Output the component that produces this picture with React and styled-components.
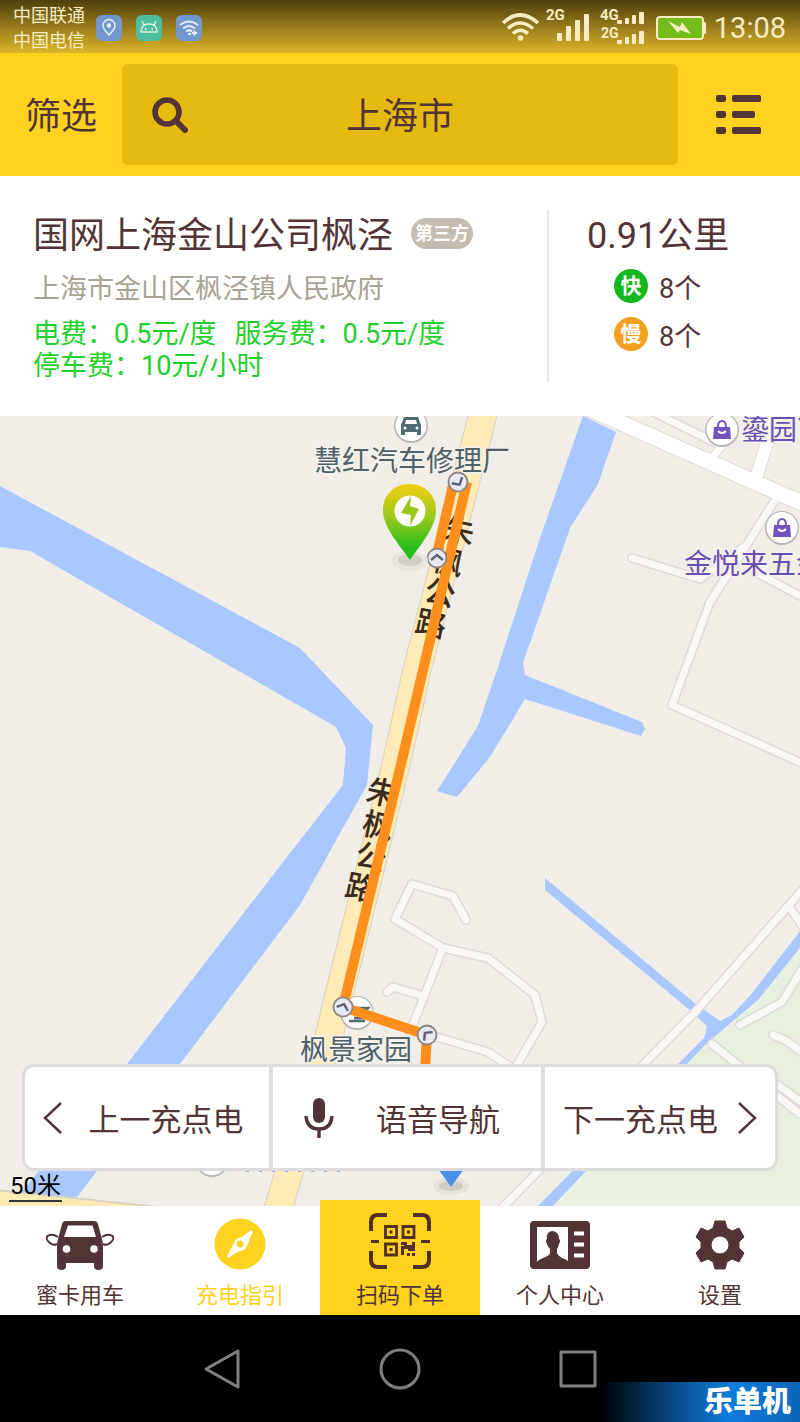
import React, { Component } from 'react'
import styled, { createGlobalStyle } from 'styled-components'

const GlobalStyle = createGlobalStyle`
* {
  box-sizing: border-box;
}
body {
  margin: 0;
  background: #000;
  color: #523436;
  font-family: Roboto, "Noto Sans CJK SC", sans-serif;
}
button, input {
  border: 0;
  margin: 0;
  padding: 0;
  background: none;
  color: inherit;
  font: inherit;
}
svg {
  display: block;
  flex: none;
}
`

const Page = styled.div`
  position: relative;
  display: flex;
  flex-direction: column;
  min-height: 100vh;
  overflow: hidden;
`

/* ---------- status bar ---------- */

const StatusBar = styled.div`
  display: flex;
  align-items: center;
  height: 53px;
  padding: 2px 14px 0 13px;
  background: linear-gradient(#4f3f0c, #967a1c 50%, #dcb52a);
  color: #f8ecc4;
`
const Carriers = styled.div`
  font-size: 18px;
  line-height: 25px;
  margin-right: 11px;
`
const AppIcons = styled.div`
  display: flex;
  gap: 14px;
`
const AppIcon = styled.svg`
  border-radius: 6px;
  background: ${props => props.$color};
`
const StatusRight = styled.div`
  display: flex;
  align-items: center;
  margin-left: auto;
`
const Clock = styled.time`
  margin-left: 8px;
  font-size: 29px;
  line-height: 50px;
`

/* ---------- header ---------- */

const Header = styled.header`
  display: grid;
  grid-template-columns: 122px 1fr 122px;
  align-items: center;
  padding: 11px 0;
  background: #ffd220;
`
const FilterButton = styled.button`
  padding-top: 4px;
  font-size: 36px;
  line-height: 54px;
`
const SearchBox = styled.label`
  display: grid;
  grid-template-columns: 66px 1fr 66px;
  align-items: center;
  height: 101px;
  border-radius: 6px;
  background: #e6b90e;

  svg {
    margin-left: 30px;
  }
`
const SearchInput = styled.input`
  width: 100%;
  height: 54px;
  padding-bottom: 3px;
  font-size: 36px;
  text-align: center;
  outline: none;
`
const MenuButton = styled.button`
  display: flex;
  justify-content: center;
`

/* ---------- station info ---------- */

const Info = styled.section`
  display: grid;
  grid-template-columns: 547fr 253fr;
  padding: 34px 0;
  background: #fff;
`
const InfoMain = styled.div`
  padding-left: 33px;
`
const TitleRow = styled.div`
  display: flex;
  align-items: center;
`
const Title = styled.h1`
  margin: 0;
  font-size: 36px;
  font-weight: 400;
  line-height: 52px;
`
const Badge = styled.span`
  margin: 0 0 6px 18px;
  padding: 0 4px;
  border-radius: 16px;
  background: #c4bcb1;
  color: #fff;
  font-size: 18px;
  font-weight: 700;
  line-height: 31px;
`
const Address = styled.p`
  margin: 8px 0 10px;
  color: #a9a396;
  font-size: 27px;
  line-height: 38px;
`
const Fees = styled.p`
  margin: 0;
  color: #1fcf2b;
  font-size: 27px;
  line-height: 32px;

  span {
    margin-right: 18px;
  }
`
const InfoSide = styled.div`
  padding-left: 38px;
  border-left: 2px solid #e9e9e9;
`
const Distance = styled.div`
  font-size: 36px;
  line-height: 52px;
`
const PileRow = styled.div`
  display: flex;
  align-items: center;
  gap: 11px;
  height: 48px;
  padding-left: 27px;
  font-size: 27px;
`
const PileType = styled.span`
  width: 34px;
  border-radius: 50%;
  background: ${props => props.$color};
  color: #fff;
  font-size: 21px;
  font-weight: 700;
  line-height: 34px;
  text-align: center;
`

/* ---------- map ---------- */

const MapArea = styled.main`
  position: relative;
  flex: 1;
  min-height: 790px;
  overflow: hidden;
  background: #f1eee8;
`
const MapCanvas = styled.svg`
  position: absolute;
  inset: 0;
  width: 100%;
  height: 100%;
`
const Scale = styled.div`
  position: absolute;
  left: 9px;
  bottom: 4px;
  border-bottom: 2px solid #333;
  padding: 0 1px;
  color: #000;
  font-size: 24px;
  line-height: 28px;
`
const Controls = styled.div`
  position: absolute;
  left: 22px;
  right: 22px;
  bottom: 35px;
  display: grid;
  grid-template-columns: 244fr 272fr 234fr;
  height: 107px;
  border: 3px solid #dcdcdc;
  border-radius: 12px;
  background: #fff;
`
const ControlButton = styled.button`
  display: flex;
  align-items: center;
  justify-content: center;
  gap: ${props => props.$gap}px;
  padding-right: ${props => props.$shift || 0}px;
  font-size: 31px;
  white-space: nowrap;

  & + & {
    border-left: 4px solid #dcdcdc;
  }
`

/* ---------- bottom tabs ---------- */

const TabBar = styled.nav`
  display: grid;
  grid-template-columns: repeat(5, 1fr);
  height: 109px;
  background: #fff;
`
const Tab = styled.button`
  position: relative;
  display: flex;
  flex-direction: column;
  align-items: center;
  justify-content: flex-end;
  gap: 13px;
  margin-top: ${props => (props.$raised ? '-6px' : 0)};
  padding-bottom: 6px;
  background: ${props => (props.$raised ? '#ffd220' : 'none')};
  color: ${props => (props.$active ? '#ffd220' : 'inherit')};
  font-size: 22px;
  line-height: 26px;
`

/* ---------- system keys ---------- */

const SystemBar = styled.div`
  display: flex;
  justify-content: center;
  height: 107px;
  background: #000;
`
const SystemKey = styled.button`
  display: flex;
  align-items: center;
  justify-content: center;
  width: 178px;
`
const Watermark = styled.div`
  position: absolute;
  right: 0;
  bottom: 0;
  width: 200px;
  padding-right: 9px;
  background: linear-gradient(90deg, transparent, #0a5aa4 45%, #0f7cdc 65%, #0c66b8);
  color: #fff;
  font-size: 29px;
  font-weight: 900;
  line-height: 40px;
  text-align: right;
`

const SearchIcon = () => (
  <svg width="36" height="36" viewBox="0 0 36 36" fill="none" stroke="#523436">
    <circle cx="15" cy="15" r="12" strokeWidth="5.5" />
    <path d="M24 24 L33 33" strokeWidth="6" strokeLinecap="round" />
  </svg>
)

const ListIcon = () => (
  <svg width="46" height="40" viewBox="0 0 46 40" fill="#523436">
    <rect x="0" y="0" width="10" height="7" rx="2" />
    <rect x="16" y="0" width="29" height="7" rx="2" />
    <rect x="0" y="16" width="10" height="7" rx="2" />
    <rect x="16" y="16" width="23" height="7" rx="2" />
    <rect x="0" y="32" width="10" height="7" rx="2" />
    <rect x="16" y="32" width="29" height="7" rx="2" />
  </svg>
)

const StatusIcons = () => (
  <svg width="206" height="51" viewBox="499 2 206 51" fill="#f8ecc4">
    <g fill="none" stroke="#f8ecc4" strokeWidth="3.6">
      <path d="M502 23 Q519 7 537 23" />
      <path d="M507 28.500 Q519 17.500 532 28.500" />
      <path d="M512 33.500 Q519 27 527 33.500" />
    </g>
    <circle cx="519.500" cy="38" r="2.800" />
    <text x="545" y="20" fontSize="15" fontWeight="700">2G</text>
    <rect x="556" y="33" width="5" height="8" rx="1" />
    <rect x="565" y="26" width="5" height="15" rx="1" />
    <rect x="574" y="20" width="5" height="21" rx="1" />
    <rect x="583" y="14" width="5" height="27" rx="1" />
    <text x="599" y="20" fontSize="15" fontWeight="700">4G</text>
    <rect x="616" y="20" width="5" height="4" rx="1" />
    <rect x="624" y="18" width="4" height="6" rx="1" />
    <rect x="631" y="15" width="4" height="9" rx="1" />
    <rect x="638" y="12" width="5" height="12" rx="1" />
    <text x="600" y="38" fontSize="14" fontWeight="700">2G</text>
    <rect x="616" y="40" width="5" height="4" rx="1" />
    <rect x="624" y="37" width="4" height="7" rx="1" />
    <rect x="631" y="34" width="4" height="10" rx="1" />
    <rect x="638" y="31" width="5" height="13" rx="1" />
    <rect x="656" y="17" width="46" height="22" rx="3" fill="#72bd1a" stroke="#f8ecc4" strokeWidth="2" />
    <rect x="702" y="22" width="3" height="12" rx="1" />
    <path d="M667 21 L679 27 L681 22 L690 34 L679 30 L677 33 Z" />
  </svg>
)

const Chevron = ({ flip }) => (
  <svg width="20" height="34" viewBox="0 0 20 34" fill="none" stroke="#523436" strokeWidth="2.4">
    <path d={flip ? 'M2 2 L18 17 L2 32' : 'M18 2 L2 17 L18 32'} />
  </svg>
)

const MicIcon = () => (
  <svg width="30" height="42" viewBox="0 0 30 42">
    <rect x="9" y="1" width="12" height="25" rx="6" fill="#523436" />
    <path d="M2 19 Q3 32 15 32 Q27 32 28 19 M15 32 V41" fill="none" stroke="#523436" strokeWidth="3.4" />
  </svg>
)

const CarIcon = () => (
  <svg width="70" height="50" viewBox="0 0 70 50" fill="#523436">
    <path
      fillRule="evenodd"
      d="M20 1 H49 Q52 1 53 4 L57 19 Q58 22 58 26 V46 Q58 50 53.500 50 Q49 50 49 46 V43 H21 V46 Q21 50 16.500 50 Q12 50 12 46 V26 Q12 22 13 19 L17 4 Q18 1 20 1 Z M23 5.500 L19 17 H51 L47.500 5.500 Z"
    />
    <circle cx="21.500" cy="29" r="3.800" fill="#fff" />
    <circle cx="49" cy="29" r="3.800" fill="#fff" />
    <path d="M13 17 Q7 13 2.500 16 Q0 19 5 23 Q8 26 12 24 M57 17 Q63 13 67.500 16 Q70 19 65 23 Q62 26 58 24" fill="none" stroke="#523436" strokeWidth="2" />
  </svg>
)

const CompassIcon = () => (
  <svg width="52" height="52" viewBox="0 0 52 52">
    <circle cx="26" cy="26" r="25.500" fill="#ffd220" />
    <path
      fill="#fff"
      fillRule="evenodd"
      d="M39 13 L33 28 Q31 33 25 33 L14 40 L13 38 L20 25 Q22 19 28 19 L37 12 Z M26 22.500 A3.500 3.500 0 1 0 26 29.500 A3.500 3.500 0 1 0 26 22.500 Z"
    />
  </svg>
)

const ScanIcon = () => (
  <svg width="64" height="57" viewBox="0 0 64 57">
    <g fill="none" stroke="#523020" strokeWidth="4">
      <path d="M19 2 H10 Q3 2 3 9 V18 M45 2 H54 Q61 2 61 9 V18 M3 38 V47 Q3 54 10 54 H19 M61 38 V47 Q61 54 54 54 H45" />
      <path d="M3 28.500 H11 M53 28.500 H62" strokeWidth="3" />
      <path d="M17.500 13.500 h11 v11 h-11 z M35 13.500 h11 v11 h-11 z M17.500 31 h11 v11 h-11 z" strokeWidth="2.800" />
    </g>
    <g fill="#523020">
      <rect x="21.500" y="17.500" width="3" height="3" />
      <rect x="39" y="17.500" width="3" height="3" />
      <rect x="21.500" y="35" width="3" height="3" />
      <path d="M33 29 H39 V32 H44 V29 H47 V38 H40 V36 H36 V42 H33 V33 H36 V32 H33 Z" />
      <rect x="39" y="40" width="3" height="3" />
      <rect x="44" y="40" width="3" height="3" />
    </g>
  </svg>
)

const ProfileIcon = () => (
  <svg width="60" height="50" viewBox="0 0 60 50">
    <rect y="1" width="60" height="48" rx="4" fill="#523436" />
    <rect x="7" y="7" width="31" height="35" fill="#fff" />
    <path
      fill="#523436"
      d="M23 11 Q29 12 29 19 Q31 20 29 24 Q28 28 27 29 V33 Q28 36 34 39 Q38 40 38 42 H7 Q8 40 13 38 Q19 36 20 33 V29 Q18 27 17 24 Q15 20 17 19 Q16 11 23 11 Z"
    />
    <path d="M44 13.500 H54 M44 24.500 H54 M44 35.500 H54" stroke="#fff" strokeWidth="4" />
  </svg>
)

const GearIcon = () => (
  <svg width="50" height="50" viewBox="0 0 50 50">
    <path
      fill="#523436"
      fillRule="evenodd"
      d="M20 1 H30 L32 8 L37 11 L44 8 L49 17 L44 22 V28 L49 33 L44 42 L37 39 L32 42 L30 49 H20 L18 42 L13 39 L6 42 L1 33 L6 28 V22 L1 17 L6 8 L13 11 L18 8 Z M25 16 A9 9 0 1 0 25 34 A9 9 0 1 0 25 16 Z"
      stroke="#523436"
      strokeWidth="1"
      strokeLinejoin="round"
    />
  </svg>
)

// Each minor road is stroked twice: a grey casing and the light surface.
const roads = [
  'M466 920 L453 896 L412 884 L395 919 L443 948 L488 958 L535 995 L542 1022 L513 1072',
  'M443 948 L410 1032',
  'M387 992 L393 987 L420 995',
  'M430 1035 L488 1052 L515 1070',
  'M653 412 L716 443',
  'M632 558 L700 579 L742 548',
  'M777 497 L742 552 L710 602 L672 705 L804 764',
  'M742 552 L710 602',
  'M757 573 L804 598',
  'M800 1114 L712 1044',
  'M740 1025 L782 1002 L804 966',
  'M773 1035 L787 1041 L804 1054',
  'M804 1104 L774 1082',
  'M790 908 L804 928',
  'M804 888 L697 1010 L500 1210',
]

const roadChars = [
  ['朱', 459, 531], ['枫', 448, 562], ['公', 440, 593], ['路', 431, 624],
  ['朱', 382, 793], ['枫', 378, 826], ['公', 371, 857], ['路', 361, 888],
]

const turns = [
  [458, 482, 150], [437, 558, 0], [343, 1007, 20], [427, 1035, -45],
]

const Poi = ({ x, y, children }) => (
  <g transform={`translate(${x} ${y})`}>
    <circle r="17" fill="#b9b7b4" />
    <circle r="15.500" cy="-0.500" fill="#fff" />
    {children}
  </g>
)

const Bag = () => (
  <g>
    <path d="M-8 -3 H8 L9 9 H-9 Z" fill="#7353bd" />
    <path d="M-4 -3 Q-4 -9 0 -9 Q4 -9 4 -3" fill="none" stroke="#7353bd" strokeWidth="2" />
    <path d="M-4 1 Q0 5 4 1" fill="none" stroke="#fff" strokeWidth="2" />
  </g>
)

const MapDrawing = () => (
  <MapCanvas viewBox="0 416 800 790" preserveAspectRatio="xMidYMid slice" fontSize="28">
    <defs>
      <linearGradient id="pin" x1="0" y1="0" x2="0" y2="1">
        <stop offset="0" stopColor="#f3cd12" />
        <stop offset="0.45" stopColor="#98c81c" />
        <stop offset="0.85" stopColor="#22bf1c" />
      </linearGradient>
    </defs>

    <path d="M804 945 L758 1000 L707 1043 L553 1210 H804 Z" fill="#e8f1df" />
    <g fill="#a9c8ff">
      <path d="M0 486 L300 648 L373 725 L367 785 L300 905 L180 1064 L70 1206 H10 L127 1064 L280 866 L343 785 L346 748 L336 727 L30 551 L0 547 Z" />
      <path d="M583 416 L616 432 L598 484 L570 528 L523 663 L525 675 L642 722 L645 729 L641 736 L525 699 L490 757 L457 797 L437 791 L478 726 L497 670 L540 538 Z" />
      <path d="M545 878 L697 1005 L720 1021 L732 1015 L753 992 L804 926 V943 L758 1000 L707 1043 L687 1064 L553 1206 H538 L678 1064 L704 1038 L707 1026 L692 1012 L545 890 Z" />
    </g>

    <path d="M-4 1196 L168 1214" stroke="#d9d2c3" strokeWidth="14" />
    <path d="M-4 1198 L168 1216" stroke="#ffe9b5" strokeWidth="14" />

    <g fill="none" strokeLinecap="round" strokeLinejoin="round">
      <g stroke="#dedad6" strokeWidth="10">
        {roads.map(d => <path key={d} d={d} />)}
      </g>
      <g stroke="#dedad6" strokeWidth="17">
        <path d="M590 409 L804 504" />
        <path d="M776 414 L757 475" strokeWidth="14" />
        <path d="M724 443 L712 458" strokeWidth="9" />
      </g>
      <g stroke="#f9f7f5" strokeWidth="7">
        {roads.map(d => <path key={d} d={d} />)}
      </g>
      <g stroke="#fff" strokeWidth="15">
        <path d="M590 409 L804 504" />
        <path d="M776 414 L757 475" strokeWidth="12" />
        <path d="M724 443 L712 458" strokeWidth="7" />
      </g>
      <g strokeLinecap="butt">
        <path d="M484 410 L417 670 L397 760 L328 1040 L278 1210" stroke="#d9d2c3" strokeWidth="29" />
        <path d="M484 410 L417 670 L397 760 L328 1040 L278 1210" stroke="#ffebb8" strokeWidth="27" />
      </g>
    </g>

    <Poi x={411} y={426}>
      <path d="M-10 -1 L-7 -9 H7 L10 -1 V9 H6 V6 H-6 V9 H-10 Z" fill="#4f6b78" />
      <path d="M-6 -2 L-5 -6 H5 L6 -2 Z" fill="#fff" />
      <circle cx="-6" cy="2" r="1.500" fill="#fff" />
      <circle cx="6" cy="2" r="1.500" fill="#fff" />
    </Poi>
    <Poi x={722} y={430}><Bag /></Poi>
    <Poi x={782} y={528}><Bag /></Poi>
    <Poi x={357} y={1013}>
      <path d="M-8 -5 H11 L8 -2 M-8 8 H8 M-3 5 H8" fill="none" stroke="#4f6b78" strokeWidth="2.500" />
    </Poi>
    <Poi x={212} y={1160} />
    <path d="M246 1171 H340" stroke="#8fa3dc" strokeWidth="2" strokeDasharray="3 10" />

    <g stroke="#f4f2ee" strokeWidth="3" paintOrder="stroke" strokeLinejoin="round">
      <text x="314" y="471" fill="#4f6066">慧红汽车修理厂</text>
      <text x="300" y="1060" fill="#4f6066">枫景家园</text>
      <text x="741" y="440" fill="#6a4fb3">鎏园丁</text>
      <text x="684" y="574" fill="#6a4fb3">金悦来五金</text>
    </g>
    <g fill="#3a2a1c" fontSize="31" fontWeight="500" textAnchor="middle">
      {roadChars.map(([char, x, y]) => (
        <text key={char + y} transform={`translate(${x} ${y}) rotate(12)`} y="11">{char}</text>
      ))}
    </g>

    <path
      d="M453 485 L437 554 M467 482 L423 670 L402 760 L343 1007 L427 1035 L425 1070"
      fill="none"
      stroke="#ff8f1c"
      strokeWidth="10"
    />
    {turns.map(([x, y, angle]) => (
      <g key={y} transform={`translate(${x} ${y}) rotate(${angle})`}>
        <circle r="9.500" fill="#e9e9f1" stroke="#8c8480" strokeWidth="1.800" />
        <path d="M-6 2 L0 -3 L6 2" fill="none" stroke="#5d6076" strokeWidth="2.400" />
      </g>
    ))}

    <ellipse cx="410" cy="561" rx="18" ry="10" fill="#e8e4de" />
    <ellipse cx="410" cy="560" rx="12" ry="6" fill="#d2cec8" />
    <path d="M409.500 484 C425 484 436 495 436 510 C436 528 420 545 410 560 C400 545 383 528 383 510 C383 495 394 484 409.500 484 Z" fill="url(#pin)" />
    <circle cx="410" cy="511" r="15.500" fill="#fff" />
    <path d="M411 496 L401 513 L411 515 L410 526 L419 509 L410 506 Z" fill="#9cc41b" />

    <ellipse cx="451" cy="1186" rx="18" ry="9" fill="#e6e3dd" />
    <ellipse cx="451" cy="1186" rx="12" ry="5" fill="#cfccc6" />
    <path d="M436 1166 H466 L451 1187 Z" fill="#4a90e6" />
  </MapCanvas>
)

const tabs = [
  { label: '蜜卡用车', icon: <CarIcon /> },
  { label: '充电指引', icon: <CompassIcon />, active: true },
  { label: '扫码下单', icon: <ScanIcon />, raised: true },
  { label: '个人中心', icon: <ProfileIcon /> },
  { label: '设置', icon: <GearIcon /> },
]

class App extends Component {
  state = {
    city: '上海市'
  }

  changeCity = (e) => {
    this.setState({ city: e.target.value })
  }

  render() {
    return (
      <Page>
        <GlobalStyle />
        <StatusBar>
          <Carriers>
            <div>中国联通</div>
            <div>中国电信</div>
          </Carriers>
          <AppIcons>
            <AppIcon $color="#7299cc" width="26" height="26" viewBox="0 0 26 26" fill="none" stroke="#e8eef2" strokeWidth="1.4">
              <path d="M13 20 Q7 14 7 10.500 A6 6 0 0 1 19 10.500 Q19 14 13 20 Z" />
              <circle cx="13" cy="10.500" r="1.500" fill="#e8eef2" />
            </AppIcon>
            <AppIcon $color="#50bea0" width="26" height="26" viewBox="0 0 26 26" fill="none" stroke="#dff0d8" strokeWidth="1.4">
              <path d="M5 17 Q5 9 13 9 Q21 9 21 17 Z M8 10 L6 6 M18 10 L20 6" />
              <path d="M9 14 h1.500 M15.500 14 h1.500" strokeWidth="2" />
            </AppIcon>
            <AppIcon $color="#7299cc" width="26" height="26" viewBox="0 0 26 26" fill="none" stroke="#e8eef2" strokeWidth="1.8">
              <path d="M4 10 Q13 3 22 10 M7 13.500 Q13 8.500 19 13.500 M10 16.500 Q13 14 16 16.500" />
              <path d="M12 19 h3 M16 18 h5 M18.500 15.500 v5" />
            </AppIcon>
          </AppIcons>
          <StatusRight>
            <StatusIcons />
            <Clock>13:08</Clock>
          </StatusRight>
        </StatusBar>

        <Header>
          <FilterButton type="button">筛选</FilterButton>
          <SearchBox>
            <SearchIcon />
            <SearchInput type="text" aria-label="城市" value={this.state.city} onChange={this.changeCity} />
          </SearchBox>
          <MenuButton type="button" aria-label="列表">
            <ListIcon />
          </MenuButton>
        </Header>

        <Info>
          <InfoMain>
            <TitleRow>
              <Title>国网上海金山公司枫泾</Title>
              <Badge>第三方</Badge>
            </TitleRow>
            <Address>上海市金山区枫泾镇人民政府</Address>
            <Fees>
              <span>电费：0.5元/度</span>服务费：0.5元/度<br />
              停车费：10元/小时
            </Fees>
          </InfoMain>
          <InfoSide>
            <Distance>0.91公里</Distance>
            <PileRow>
              <PileType $color="#14b81e">快</PileType>8个
            </PileRow>
            <PileRow>
              <PileType $color="#f3a11e">慢</PileType>8个
            </PileRow>
          </InfoSide>
        </Info>

        <MapArea>
          <MapDrawing />
          <Scale>50米</Scale>
          <Controls>
            <ControlButton type="button" $gap={26} $shift={8}>
              <Chevron />上一充点电
            </ControlButton>
            <ControlButton type="button" $gap={42} $shift={10}>
              <MicIcon />语音导航
            </ControlButton>
            <ControlButton type="button" $gap={19}>
              下一充点电<Chevron flip />
            </ControlButton>
          </Controls>
        </MapArea>

        <TabBar>
          {tabs.map(tab => (
            <Tab key={tab.label} type="button" $active={tab.active} $raised={tab.raised}>
              {tab.icon}
              {tab.label}
            </Tab>
          ))}
        </TabBar>

        <SystemBar>
          <SystemKey type="button" aria-label="返回">
            <svg width="40" height="42" viewBox="0 0 40 42" fill="none" stroke="#808080" strokeWidth="3" strokeLinejoin="round">
              <path d="M36 3 V39 L4 21 Z" />
            </svg>
          </SystemKey>
          <SystemKey type="button" aria-label="主屏幕">
            <svg width="42" height="42" viewBox="0 0 42 42" fill="none" stroke="#808080" strokeWidth="3">
              <circle cx="21" cy="21" r="19" />
            </svg>
          </SystemKey>
          <SystemKey type="button" aria-label="最近任务">
            <svg width="38" height="38" viewBox="0 0 38 38" fill="none" stroke="#808080" strokeWidth="3" strokeLinejoin="round">
              <rect x="2" y="2" width="34" height="34" />
            </svg>
          </SystemKey>
        </SystemBar>
        <Watermark>乐单机</Watermark>
      </Page>
    )
  }
}

export default App
